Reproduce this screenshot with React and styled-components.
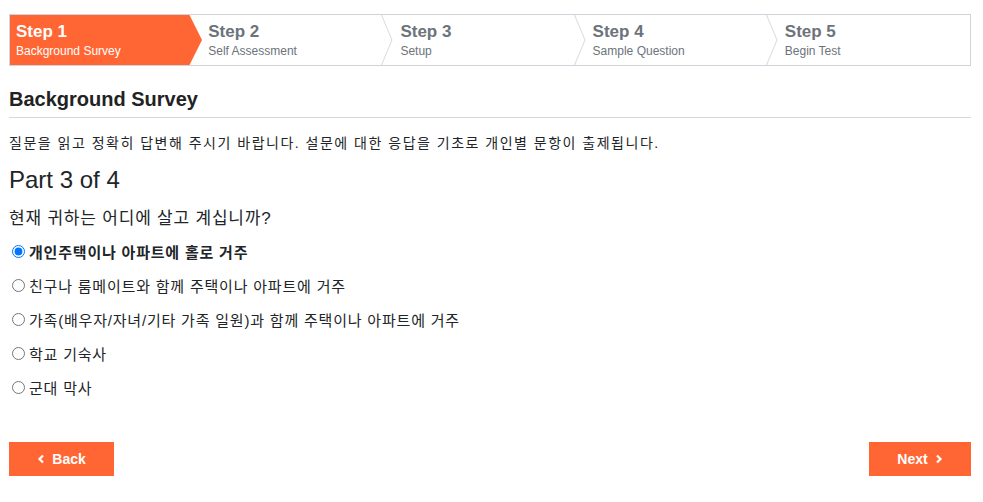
import React from 'react'
import styled, { createGlobalStyle } from 'styled-components'

const Global = createGlobalStyle`
	body {
		margin: 0;
		background: #fff;
		font-family: "Liberation Sans", "Noto Sans CJK KR", sans-serif;
		color: #212529;
	}
`

const ORANGE = '#ff6633'

const Page = styled.div`
	width: 962px;
	margin: 14px 0 0 9px;
`

const Stepper = styled.div`
	display: flex;
	height: 50px;
	border: 1px solid #cfd4da;
`

const StepCell = styled.div`
	position: relative;
	flex: 1;
	padding: 7px 0 0 7px;
	box-sizing: border-box;
	color: ${p => (p.$active ? '#fff' : '#6c737b')};
	background: ${p => (p.$active ? `linear-gradient(to right, ${ORANGE} calc(100% - 13px), transparent calc(100% - 13px))` : 'transparent')};
	&:first-child {
		padding-left: 6px;
	}
`

const StepTitle = styled.div`
	font-size: 17px;
	font-weight: bold;
	line-height: 20px;
`

const StepSub = styled.div`
	font-size: 12px;
	line-height: 16px;
	margin-top: 1px;
`

const Chevron = styled.svg`
	position: absolute;
	top: 0;
	right: -1px;
	width: 14px;
	height: 50px;
	z-index: 1;
`

const Heading = styled.h2`
	margin: 19px 0 0;
	font-size: 20px;
	font-weight: bold;
	line-height: 28px;
	padding-bottom: 4px;
	border-bottom: 1px solid #d5d8dc;
	color: #222;
`

const Intro = styled.p`
	margin: 15px 0 0;
	font-size: 14px;
	line-height: 20px;
	letter-spacing: 1.5px;
`

const Part = styled.div`
	margin-top: 12px;
	font-size: 24px;
	line-height: 30px;
`

const Question = styled.div`
	margin-top: 12px;
	font-size: 17px;
	line-height: 24px;
	letter-spacing: 0.8px;
`

const Options = styled.div`
	display: flex;
	flex-direction: column;
	margin-top: 9px;
	gap: 12px;
`

const Option = styled.label`
	display: flex;
	align-items: center;
	height: 22px;
	font-size: 15px;
	letter-spacing: 0.8px;
	font-weight: ${p => (p.$checked ? 'bold' : 'normal')};
	input {
		margin: 0 4px 0 3px;
		width: 13px;
		height: 13px;
	}
`

const Footer = styled.div`
	display: flex;
	justify-content: space-between;
	margin-top: 44px;
`

const NavButton = styled.button`
	display: flex;
	align-items: center;
	justify-content: center;
	gap: 7px;
	width: ${p => p.$w}px;
	height: 34px;
	border: none;
	background: ${ORANGE};
	color: #fff;
	font-family: "Liberation Sans", sans-serif;
	font-size: 14px;
	font-weight: bold;
	box-shadow: 0 2px 0 #c9c9c9;
	cursor: pointer;
	svg {
		width: 8px;
		height: 10px;
	}
`

const steps = [
	['Step 1', 'Background Survey'],
	['Step 2', 'Self Assessment'],
	['Step 3', 'Setup'],
	['Step 4', 'Sample Question'],
	['Step 5', 'Begin Test'],
]

const options = [
	'개인주택이나 아파트에 홀로 거주',
	'친구나 룸메이트와 함께 주택이나 아파트에 거주',
	'가족(배우자/자녀/기타 가족 일원)과 함께 주택이나 아파트에 거주',
	'학교 기숙사',
	'군대 막사',
]

export default function App() {
	return (
		<Page>
			<Global />
			<Stepper>
				{steps.map(([title, sub], i) => (
					<StepCell key={title} $active={i === 0}>
						<StepTitle>{title}</StepTitle>
						<StepSub>{sub}</StepSub>
						{i < steps.length - 1 && (
							<Chevron viewBox="0 0 14 50">
								{i === 0 ? (
									<polygon points="0,0 1.5,0 14,25 1.5,50 0,50" fill={ORANGE} />
								) : (
									<polyline points="1.5,0 12,25 1.5,50" fill="none" stroke="#d6d9dd" strokeWidth="1" />
								)}
							</Chevron>
						)}
					</StepCell>
				))}
			</Stepper>

			<Heading>Background Survey</Heading>
			<Intro>질문을 읽고 정확히 답변해 주시기 바랍니다. 설문에 대한 응답을 기초로 개인별 문항이 출제됩니다.</Intro>
			<Part>Part 3 of 4</Part>
			<Question>현재 귀하는 어디에 살고 계십니까?</Question>

			<Options>
				{options.map((o, i) => (
					<Option key={o} $checked={i === 0}>
						<input type="radio" name="live" defaultChecked={i === 0} />
						{o}
					</Option>
				))}
			</Options>

			<Footer>
				<NavButton $w={105}>
					<svg viewBox="0 0 8 10"><polyline points="6,1.5 2.5,5 6,8.5" fill="none" stroke="#fff" strokeWidth="2.2" /></svg>
					Back
				</NavButton>
				<NavButton $w={102}>
					Next
					<svg viewBox="0 0 8 10"><polyline points="2,1.5 5.5,5 2,8.5" fill="none" stroke="#fff" strokeWidth="2.2" /></svg>
				</NavButton>
			</Footer>
		</Page>
	)
}
